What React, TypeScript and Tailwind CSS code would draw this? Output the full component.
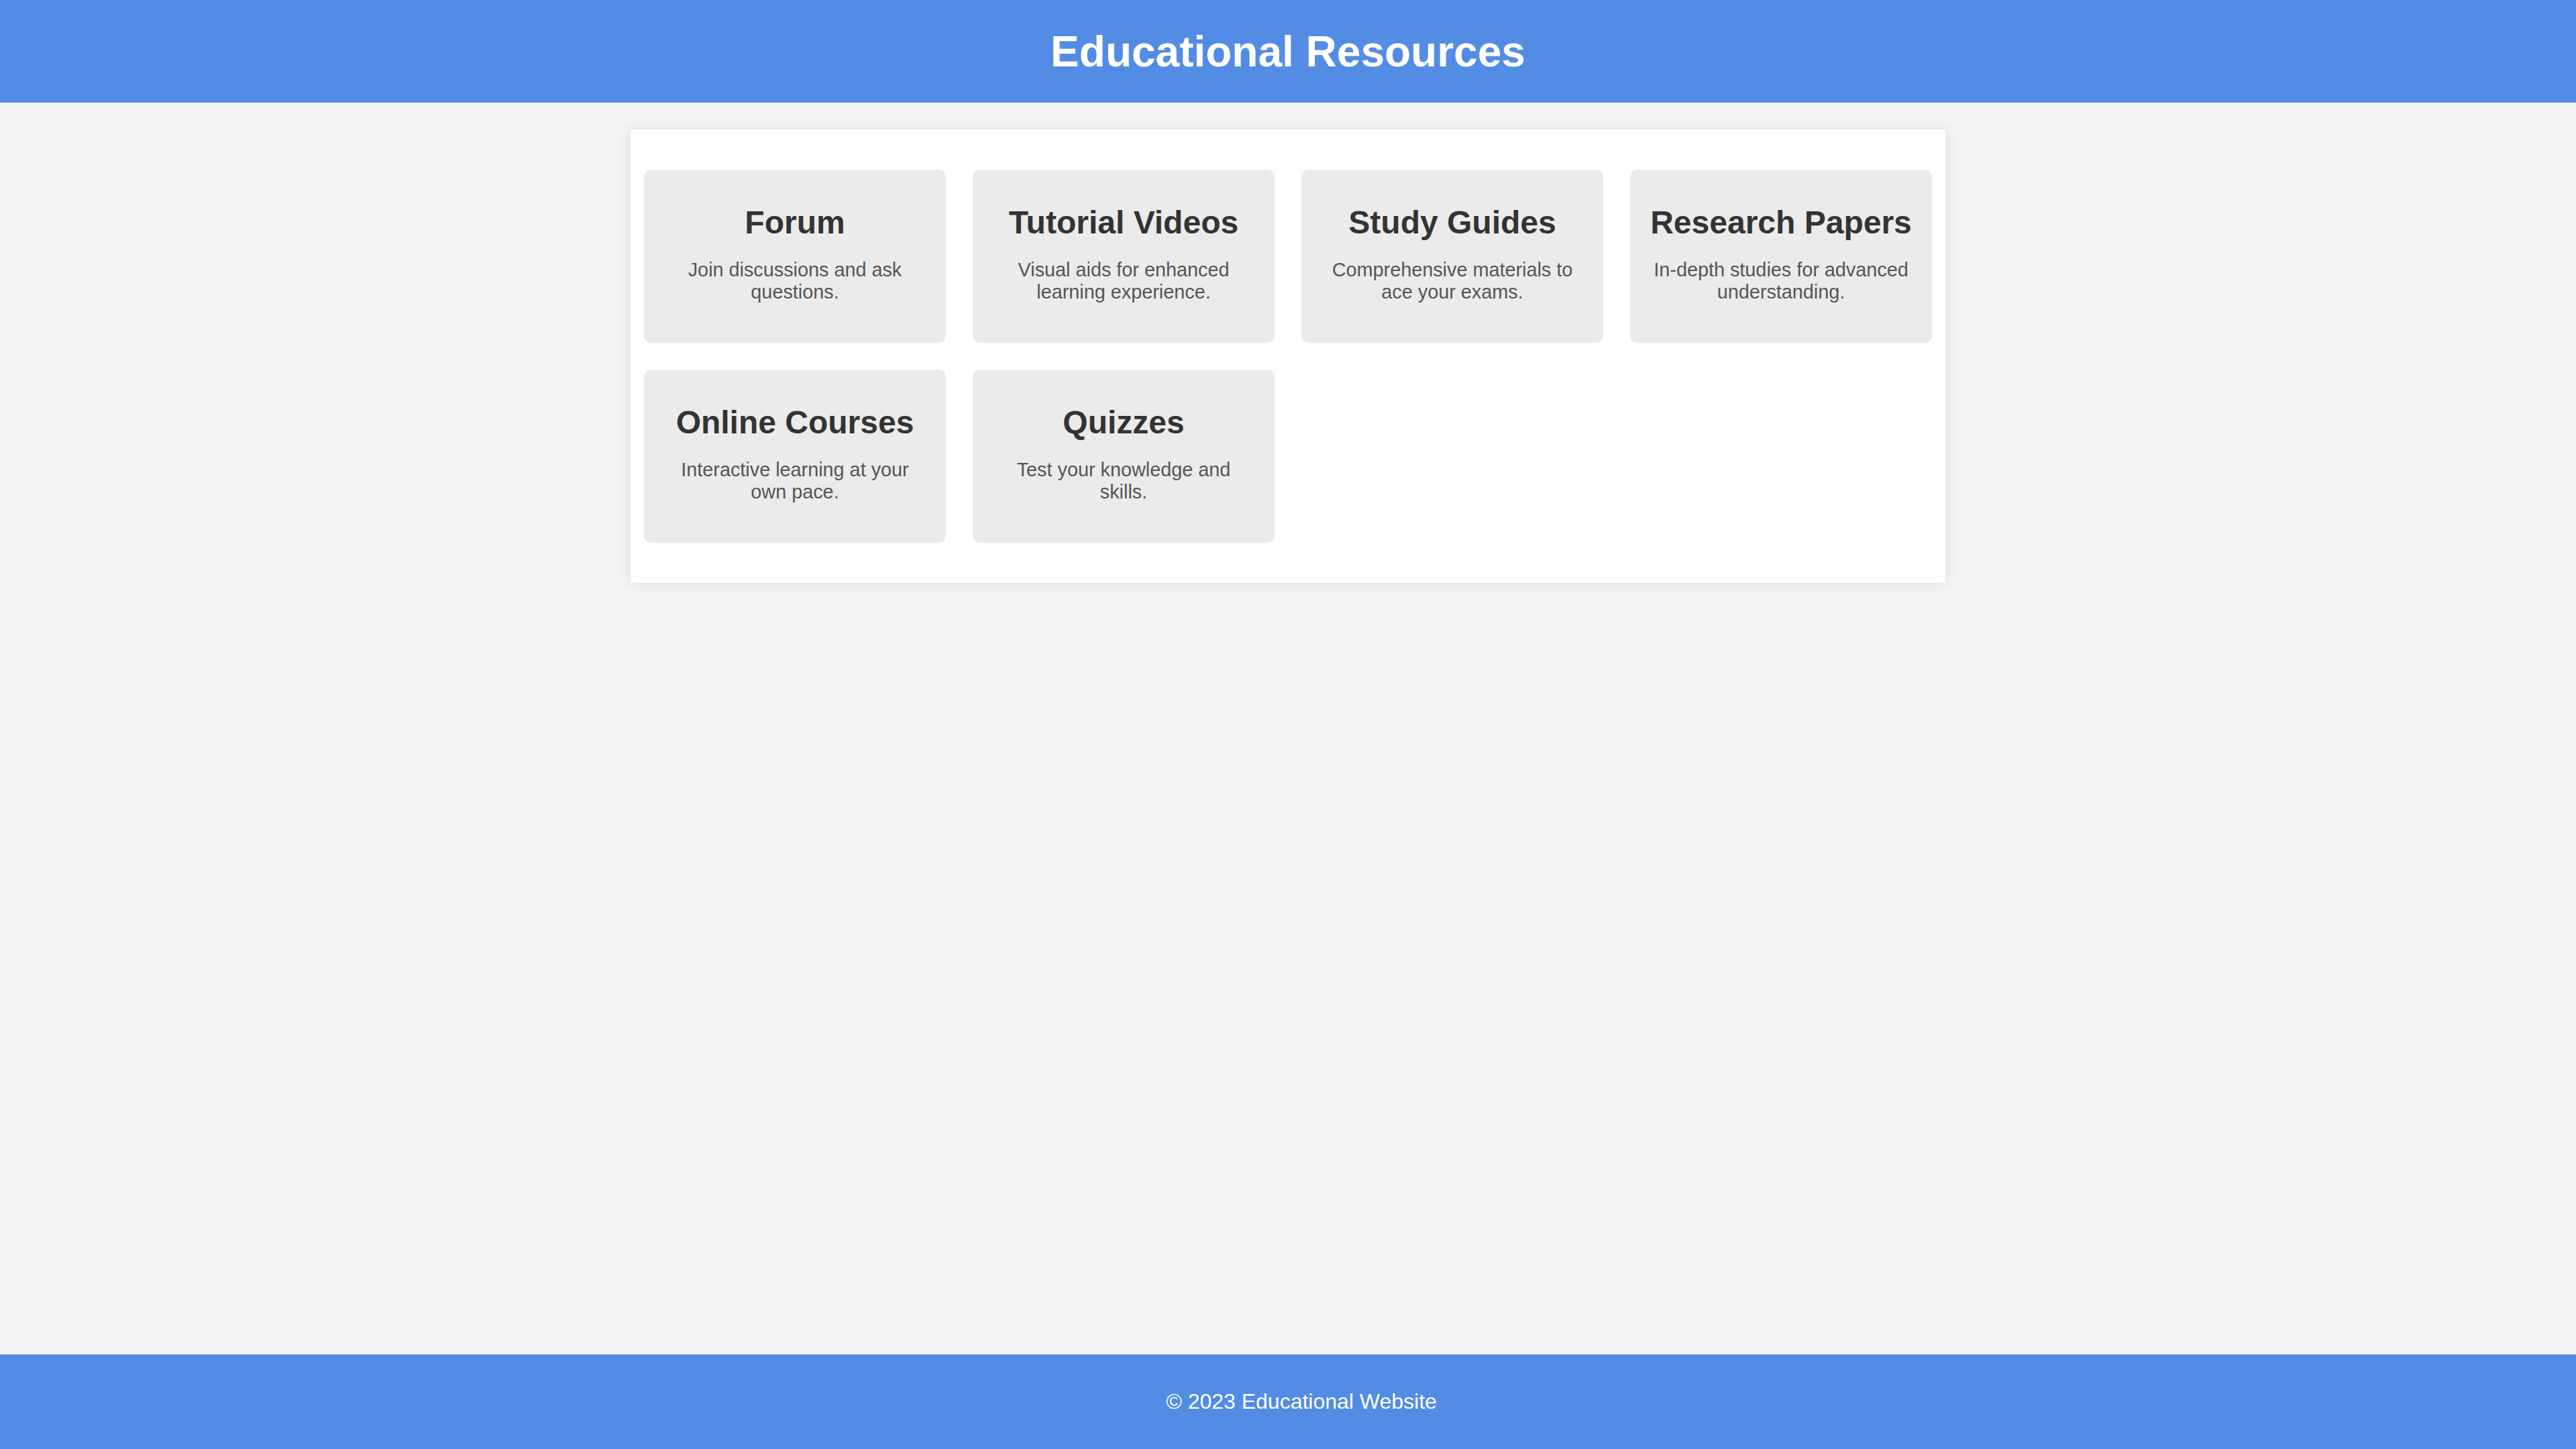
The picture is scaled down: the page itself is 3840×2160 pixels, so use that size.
import React from "react";

const items = [
  { t: "Forum", d: "Join discussions and ask questions." },
  { t: "Tutorial Videos", d: "Visual aids for enhanced learning experience." },
  { t: "Study Guides", d: "Comprehensive materials to ace your exams." },
  { t: "Research Papers", d: "In-depth studies for advanced understanding." },
  { t: "Online Courses", d: "Interactive learning at your own pace." },
  { t: "Quizzes", d: "Test your knowledge and skills." },
];

export default function App() {
  return (
    <div
      className="min-h-screen flex flex-col bg-[#f4f4f4]"
      style={{ fontFamily: '"Liberation Sans", Arial, sans-serif' }}
    >
      <header className="bg-[#538ce4] text-white text-center pt-[40px] pb-[39px]">
        <h1 className="text-[64px] leading-[74px] font-bold">Educational Resources</h1>
      </header>
      <main className="w-[1960px] mx-auto mt-[40px] bg-white px-[20px] py-[60px] shadow-[0_0_20px_rgba(0,0,0,0.1)]">
        <div className="grid grid-cols-4 gap-[40px]">
          {items.map((it) => (
            <div
              key={it.t}
              className="bg-[#ebebeb] rounded-[10px] px-[30px] pt-[51px] pb-[59px] text-center"
            >
              <h2 className="text-[48px] leading-[55px] font-bold text-[#333333] whitespace-nowrap">
                {it.t}
              </h2>
              <p className="mt-[27px] text-[28.8px] leading-[33px] text-[#555555]">{it.d}</p>
            </div>
          ))}
        </div>
      </main>
      <footer className="mt-auto bg-[#538ce4] text-white text-center py-[52px] pl-[40px]">
        <p className="text-[32px] leading-[37px]">© 2023 Educational Website</p>
      </footer>
    </div>
  );
}
